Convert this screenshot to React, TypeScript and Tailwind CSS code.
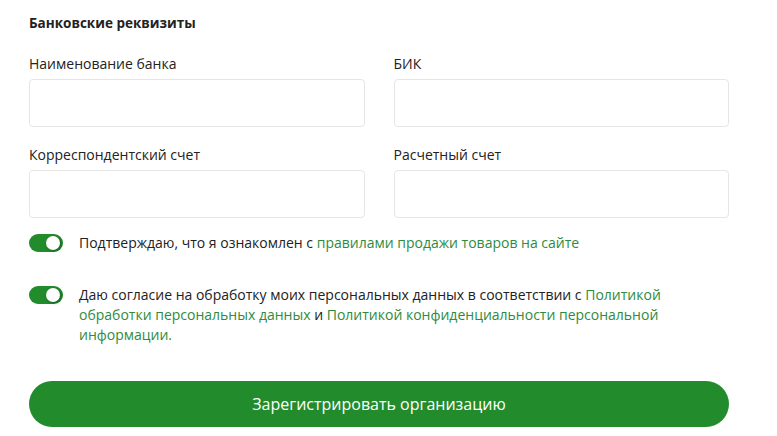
import { useState } from "react";

const font = { fontFamily: '"Open Sans", "Noto Sans", sans-serif' };

function Field({ label }: { label: string }) {
  return (
    <div className="flex flex-col">
      <label className="text-[14px] leading-[18px] text-[#222]">{label}</label>
      <input
        type="text"
        className="mt-[6px] h-[48px] w-full rounded-[4px] border border-[#e6e6e6] bg-white px-3 outline-none"
      />
    </div>
  );
}

function Toggle({ on, onChange }: { on: boolean; onChange: () => void }) {
  return (
    <button
      type="button"
      onClick={onChange}
      className={`relative h-[18px] w-[34px] shrink-0 rounded-full ${on ? "bg-[#228b2b]" : "bg-gray-300"}`}
    >
      <span
        className={`absolute top-[2px] h-[14px] w-[14px] rounded-full bg-white shadow-[1px_1px_3px_rgba(0,0,0,0.35)] ${on ? "left-[17px]" : "left-[2px]"}`}
      />
    </button>
  );
}

export default function App() {
  const [rules, setRules] = useState(true);
  const [personal, setPersonal] = useState(true);

  return (
    <div className="min-h-[436px] w-[777px] bg-white px-[29px] pt-[14px]" style={font}>
      <h2 className="text-[13.5px] font-bold leading-[18px] text-[#222]">Банковские реквизиты</h2>

      <div className="mt-[23px] grid w-[700px] grid-cols-2 gap-x-[29px] gap-y-[19px]">
        <Field label="Наименование банка" />
        <Field label="БИК" />
        <Field label="Корреспондентский счет" />
        <Field label="Расчетный счет" />
      </div>

      <div className="mt-[15px] flex items-center gap-[16px]">
        <Toggle on={rules} onChange={() => setRules(!rules)} />
        <p className="text-[14px] leading-[20px] text-[#222]">
          Подтверждаю, что я ознакомлен с{" "}
          <a href="#" className="text-[#2e8b3e]">правилами продажи товаров на сайте</a>
        </p>
      </div>

      <div className="mt-[32px] flex items-start gap-[16px]">
        <div className="pt-[1px]">
          <Toggle on={personal} onChange={() => setPersonal(!personal)} />
        </div>
        <p className="w-[600px] text-[14px] leading-[20px] text-[#222]">
          Даю согласие на обработку моих персональных данных в соответствии с{" "}
          <a href="#" className="text-[#2e8b3e]">Политикой обработки персональных данных</a> и{" "}
          <a href="#" className="text-[#2e8b3e]">Политикой конфиденциальности персональной информации.</a>
        </p>
      </div>

      <button
        type="button"
        className="mt-[36px] h-[46px] w-[700px] rounded-full bg-[#228b2b] text-[16px] text-white"
      >
        Зарегистрировать организацию
      </button>
    </div>
  );
}
